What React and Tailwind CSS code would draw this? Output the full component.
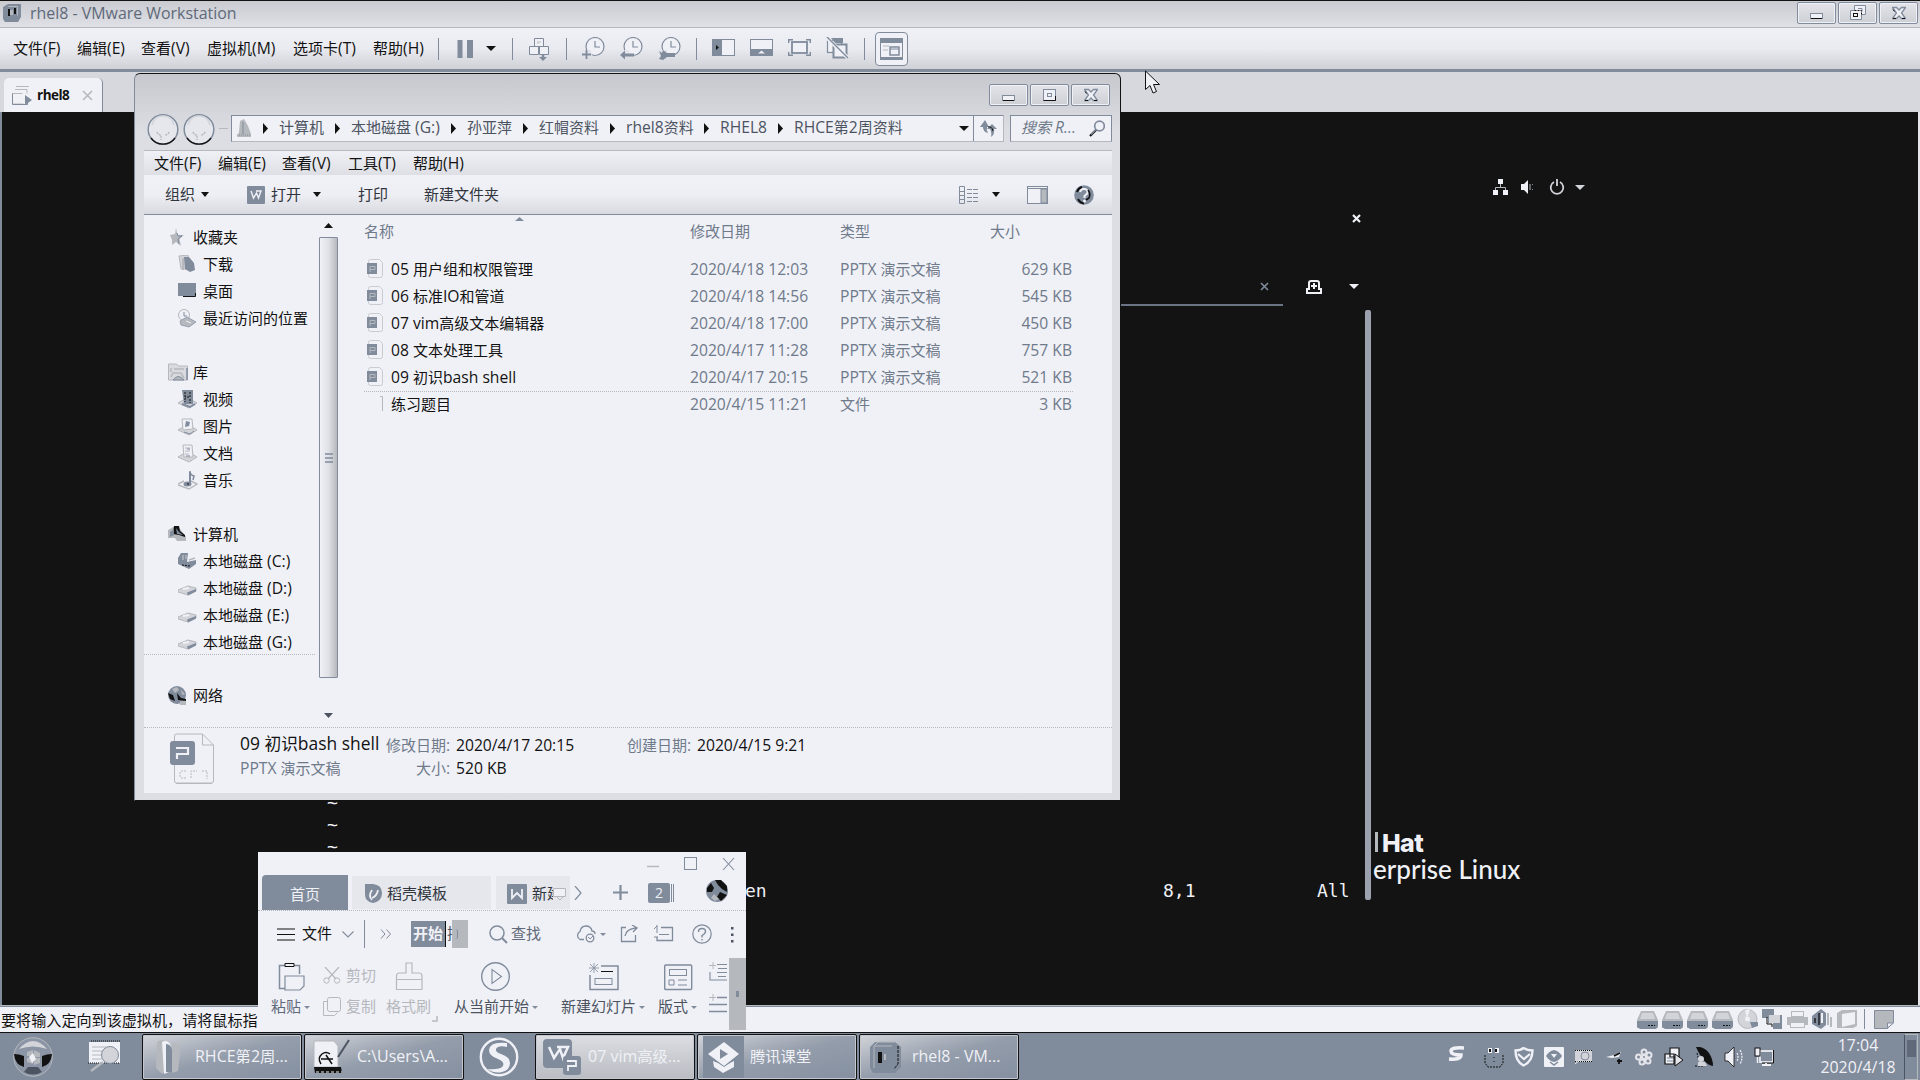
import React from "react";

/* Splits a label so that Latin runs are set slightly larger than the CJK glyphs. */
function T({ children, className = "" }) {
  const parts = String(children).split(/([\u2E80-\u9FFF\uFF00-\uFFEF]+)/).filter(Boolean);
  return (
    <span className={"block shrink-0 whitespace-pre pb-[2px] " + className}>
      {parts.map((p, i) =>
        /[\u2E80-\u9FFF\uFF00-\uFFEF]/.test(p) ? (
          <span key={i}>{p}</span>
        ) : (
          <span key={i} className="text-[1.045em]">{p}</span>
        )
      )}
    </span>
  );
}

const G = "#808b9c";
const L = "#b5b8bd";
const W = "#f0f1f6";
const K = "#121212";

function Svg({ w, h, children, className = "" }) {
  return (
    <svg width={w} height={h} viewBox={`0 0 ${w} ${h}`} fill="none" className={"block shrink-0 " + className}>
      {children}
    </svg>
  );
}

function Sep({ className = "" }) {
  return <div className={"w-px h-[22px] shrink-0 bg-[#808b9c] " + className} />;
}

function Caret({ className = "", color = K, w = 9, h = 5 }) {
  return (
    <Svg w={w} h={h} className={className}>
      <path d={`M0 0H${w}L${w / 2} ${h}Z`} fill={color} />
    </Svg>
  );
}

function WinButton({ kind }) {
  return (
    <div className="w-[39px] h-[22px] shrink-0 flex items-center justify-center rounded-[2px] border border-[#808b9c] bg-gradient-to-b from-[#e4e5ea] to-[#cccfd4] shadow-[inset_0_0_0_1px_#f0f1f6]">
      {kind === "min" && (
        <Svg w={14} h={14}><rect x="0.5" y="7.5" width="12" height="5" fill={W} stroke={G} /><path d="M1 12.5H12" stroke={K} /></Svg>
      )}
      {kind === "max" && (
        <Svg w={14} h={14}><rect x="0.5" y="1.5" width="12" height="11" fill={W} stroke={G} /><path d="M0.5 12.5h12V8" stroke={K} /><rect x="4.5" y="5.5" width="4" height="3" stroke={G} /></Svg>
      )}
      {kind === "restore" && (
        <Svg w={16} h={16}><path d="M4.5 0.5h11v9h-4v5h-11v-9h4z" fill={W} stroke={G} /><rect x="3.5" y="8.5" width="4" height="3" stroke={K} /><path d="M8 3.5h4v3" stroke={G} /><path d="M4.5 5.5h7v4" stroke={K} strokeDasharray="2 1" /></Svg>
      )}
      {kind === "close" && (
        <Svg w={14} h={14}><path d="M0.5 1.5h4L7 4l2.500-2.500h4L9.500 7l4 5.500h-4L7 10l-2.500 2.500h-4L4.500 7z" fill={W} stroke={G} strokeWidth="1.300" /><path d="M1 12.500h3M10 12.500h3M1 3.500l1.500 2" stroke={K} /></Svg>
      )}
    </div>
  );
}

function Clock({ badge }) {
  return (
    <Svg w={23} h={24}>
      <circle cx="13" cy="9.500" r="9" stroke={G} strokeWidth="1.200" fill={W} />
      <path d="M13 4v6h5" stroke={G} strokeWidth="1.200" />
      <path d="M0 13h9l1 6H0z" fill="#e4e5ea" />
      {badge === "plus" && <path d="M4.500 13v9M0 17.500h9" stroke={G} strokeWidth="1.800" />}
      {badge === "back" && <path d="M0 18l5-4.500V16.500h9v3H5V22.500z" fill={G} />}
      {badge === "wrench" && <path d="M1 14l3 2 1-3 4 3h8v4H9l-4 3-4-1 2-3z" fill={G} />}
    </Svg>
  );
}

function VmTitle() {
  return (
    <div className="h-[28px] flex border-t border-t-[#121212] border-b border-b-[#b5b8bd] bg-gradient-to-b from-[#c9cbd0] to-[#dfe1e6] pl-[3px]">
      <Svg w={20} h={20} className="mt-[2px]">
        <path d="M5 1h13v13l-3 5H2L0 16V4z" fill={G} />
        <path d="M5.500 3.500h9v9" stroke={L} />
        <path d="M6 6v7M12 5v6" stroke={K} strokeWidth="2" />
        <path d="M7 7h3v5h-3z" fill={L} />
      </Svg>
      <T className="ml-[7px] mt-px text-[15.250px] leading-[22px] text-[#5f697a]">rhel8 - VMware Workstation</T>
      <div className="flex-1" />
      <div className="flex gap-[2px] mt-px pr-[2px]"><WinButton kind="min" /><WinButton kind="restore" /><WinButton kind="close" /></div>
    </div>
  );
}

function VmMenu() {
  return (
    <div className="h-[41px] flex items-center bg-gradient-to-b from-[#f0f1f6] via-[#eaebf0] to-[#cfd1d6] pl-[13px] text-[15px] leading-[20px]">
      <T className="w-[64px]">文件(F)</T>
      <T className="w-[64px]">编辑(E)</T>
      <T className="w-[66px]">查看(V)</T>
      <T className="w-[86px]">虚拟机(M)</T>
      <T className="w-[80px]">选项卡(T)</T>
      <T className="w-[65px]">帮助(H)</T>
      <Sep />
      <Svg w={16} h={18} className="ml-[18px]"><path d="M0.500 0h5v18h-5zM10 0h6v18h-6z" fill={G} /></Svg>
      <Caret className="ml-[13px]" w={10} />
      <Sep className="ml-[16px]" />
      <Svg w={22} h={24} className="ml-[15px]">
        <path d="M6.500 1.500h9v8h-9zM1.500 9.500h9v8h-9zM11.500 9.500h9v8h-9z" stroke={G} fill={W} />
        <path d="M10 4v3M12 4v2" stroke={L} />
        <path d="M15 17v4" stroke={G} strokeWidth="2.500" /><path d="M11 20h8l-4 4z" fill={G} />
      </Svg>
      <Sep className="ml-[16px]" />
      <div className="ml-[15px] flex gap-[15px]"><Clock badge="plus" /><Clock badge="back" /><Clock badge="wrench" /></div>
      <Sep className="ml-[15px]" />
      <div className="flex ml-[15px] gap-[15px]">
        <Svg w={23} h={17}><rect x="0.500" y="0.500" width="22" height="16" stroke={G} fill={W} /><path d="M0 0h10v17H0z" fill={G} /><path d="M4 6l3 2.500L4 11z" fill={K} /></Svg>
        <Svg w={23} h={17}><rect x="0.500" y="0.500" width="22" height="16" stroke={G} fill={W} /><path d="M0 10h23v7H0z" fill={G} /><path d="M8 14.500h7l-3.500-3z" fill={W} /></Svg>
        <Svg w={23} h={17}><rect x="4" y="3" width="15" height="11" stroke={G} strokeWidth="1.800" fill={W} /><path d="M0.700 4V0.700H5M18 0.700h4.300V4M0.700 13v3.300H5M18 16.300h4.300V13" stroke={G} strokeWidth="1.400" /></Svg>
        <Svg w={23} h={22} className="-mt-[2px]"><rect x="1.500" y="3.500" width="14" height="12" fill={W} stroke={G} strokeWidth="1.200" /><rect x="7.500" y="7.500" width="13" height="13" fill={W} stroke={G} strokeWidth="2" /><path d="M5 1h12v5H9z" fill={G} /><path d="M1 1L22 21" stroke={W} strokeWidth="3.500" /><path d="M1 0L22 21" stroke={G} strokeWidth="1.400" /></Svg>
      </div>
      <Sep className="ml-[15px]" />
      <div className="ml-[10px] w-[33px] h-[34px] shrink-0 rounded-[4px] border border-[#808b9c] bg-[#f0f1f6] flex items-center justify-center">
        <Svg w={23} h={22}><rect x="0.500" y="0.500" width="22" height="21" stroke={G} fill={W} /><path d="M0 0h23v5H0zM0 19h23v3H0z" fill={G} /><path d="M3 8h6M3 12h5" stroke={L} /><rect x="10" y="9" width="9" height="8" fill={W} stroke={G} strokeWidth="1.500" /><path d="M10 11h9" stroke={G} /></Svg>
      </div>
    </div>
  );
}

function VmTabs() {
  return (
    <div className="h-[40px] flex items-end bg-[#d6d8dd] pl-[4px]">
      <div className="w-[99px] h-[34px] shrink-0 rounded-t-[5px] border-r border-[#808b9c] bg-[#f0f1f6] flex items-center pl-[8px]">
        <Svg w={20} h={21}>
          <path d="M4 1.500h13M3 4.500h12v4M1 8.500h9.500M0.500 8v11h11" stroke={L} />
          <path d="M0.500 8.500v11h15v-3" stroke={G} />
          <path d="M13 10l7 5-7 5z" fill={G} />
        </Svg>
        <span className="ml-[5px] text-[13.500px] leading-[20px] font-bold tracking-[-0.500px]">rhel8</span>
        <Svg w={11} h={11} className="ml-[13px]"><path d="M1 1l9 9M10 1l-9 9" stroke={L} strokeWidth="1.600" /></Svg>
      </div>
    </div>
  );
}

/* ---------- guest desktop ---------- */

function Guest() {
  return (
    <div className="relative h-[893px] bg-[#131313] border-l-2 border-l-[#808b9c] border-r-2 border-r-[#e4e5ea] overflow-hidden">
      <div className="absolute left-[1491px] top-[67px] flex items-center">
        <Svg w={16} h={16}><path d="M5 0h5v5H5zM0 11h5v5H0zM10 11h5v5h-5z" fill={W} /><path d="M7.500 5v3.500M2.500 11V8.500h10V11" stroke={L} /></Svg>
        <Svg w={13} h={14} className="ml-[12px]"><path d="M0 4h3l4-4v14l-4-4H0z" fill={W} /><path d="M9 4v6" stroke={L} /><path d="M11.500 4v1M11.500 9v1" stroke={G} /></Svg>
        <Svg w={16} h={16} className="ml-[15px]"><path d="M5 3a6.300 6.300 0 1 0 6 0M8 0v7" stroke="#d2d4d9" strokeWidth="1.800" /></Svg>
        <Caret className="ml-[10px]" w={10} color="#d2d4d9" />
      </div>
      <Svg w={9} h={9} className="absolute left-[1350px] top-[102px]"><path d="M1 1l7 7M8 1l-7 7" stroke={W} strokeWidth="2.200" /></Svg>
      <Svg w={9} h={9} className="absolute left-[1258px] top-[170px]"><path d="M1 1l7 7M8 1l-7 7" stroke={G} strokeWidth="1.600" /></Svg>
      <Svg w={16} h={14} className="absolute left-[1304px] top-[168px]"><path d="M3 9V3q0-2 2-2h6q2 0 2 2v6h2v4H1V9z" stroke={W} strokeWidth="2" /><path d="M8 3v6M5 6h6" stroke={W} strokeWidth="2" /></Svg>
      <Caret className="absolute left-[1347px] top-[172px]" w={10} color={W} />
      <div className="absolute left-[1110px] top-[192px] w-[171px] h-[2px] bg-[#6a7484]" />
      <div className="absolute left-[1363px] top-[198px] w-[6px] h-[590px] rounded-[2px] bg-[#9ba1ad]" />
      <div className="absolute left-[1373px] top-[720px] w-[3px] h-[20px] bg-[#b5b8bd]" />
      <div className="absolute left-[1380px] top-[716px] text-[25px] leading-[30px] font-extrabold tracking-[-0.600px] text-[#f0f1f6] [font-family:Inter]">Hat</div>
      <div className="absolute left-[1371px] top-[742px] text-[26px] leading-[30px] text-[#f0f1f6] [font-family:Lato] font-medium">erprise Linux</div>
      <div className="absolute left-[325px] top-[680px] text-[18px] leading-[22px] text-[#f0f1f6] [font-family:'DejaVu_Sans_Mono']">
        <div className="flex flex-col"><span>~</span><span>~</span><span>~</span></div>
      </div>
      <div className="absolute left-[743px] top-[768px] flex text-[18px] leading-[22px] text-[#f0f1f6] [font-family:'DejaVu_Sans_Mono']">
        <span className="w-[418px]">en</span><span className="w-[154px]">8,1</span><span>All</span>
      </div>
    </div>
  );
}

/* ---------- status bar ---------- */

function Disk() {
  return (
    <Svg w={21} h={19}><path d="M4 1h13l4 9v8H0v-8z" fill={L} /><path d="M5 3h11l2 6H3z" fill="#d2d4d9" /><path d="M0 11h21v5l-2 3H3l-3-2z" fill={G} /><path d="M11 15.500h7" stroke={K} strokeDasharray="2 1" /></Svg>
  );
}

function StatusBar() {
  return (
    <div className="h-[27px] flex items-center bg-[#f0f1f6] border-t border-t-[#b5b8bd] shadow-[inset_0_1px_0_#808b9c]">
      <T className="w-[1637px] pl-px !pb-0 pt-[2px] text-[15.100px] leading-[20px]">要将输入定向到该虚拟机，请将鼠标指</T>
      <div className="flex items-center gap-[4px]">
        <Disk /><Disk /><Disk /><Disk />
        <Svg w={21} h={20}><circle cx="10.500" cy="10" r="9.500" fill="#d2d4d9" stroke={L} /><circle cx="10.500" cy="10" r="2.500" fill={W} /><path d="M13 13h8v4l-6 2z" fill={G} /><path d="M10 9L8 1l5-1z" fill={W} /></Svg>
        <Svg w={21} h={20}><path d="M0 0h12v6h8v14h-9v-6H6V9H0z" fill={G} /><rect x="7" y="6" width="11" height="8" fill="#d2d4d9" /><path d="M5 8v7h5v3" stroke={K} /></Svg>
        <Svg w={21} h={20}><path d="M4 2h13v6h4v8h-3v3H3v-3H0V8h4z" fill={L} /><path d="M5 3h11v4H5zM4 14h13v4H4z" fill={W} /><path d="M3 11h15" stroke={L} /></Svg>
        <Svg w={21} h={20}><path d="M9 0l5 4v12l-5 4-9-5V7z" fill={G} /><path d="M7 4v12M3 9v5" stroke={K} strokeWidth="1.300" /><path d="M10 4v10" stroke={W} strokeWidth="2" /><path d="M16 4v12M19 8v10" stroke={L} strokeWidth="2" /></Svg>
        <Svg w={21} h={20}><path d="M0 4l5-3h15v16l-4 2H0z" fill={L} /><path d="M5 5l13-2v12l-13 3z" fill={W} /></Svg>
      </div>
      <Sep className="ml-[6px] !h-[20px]" />
      <Svg w={20} h={19} className="ml-[9px]"><path d="M0.500 0.500h19v12l-6 6h-13z" fill={L} stroke={G} /><path d="M13.500 18v-5h6z" fill={W} stroke={G} /></Svg>
    </div>
  );
}

/* ---------- explorer ---------- */

function Arrow() {
  return <div className="w-[5px] shrink-0"><Svg w={5} h={11}><path d="M0 0l5 5.500L0 11z" fill={K} /></Svg></div>;
}

function Glass() {
  return (
    <Svg w={16} h={17}><circle cx="10.500" cy="6" r="4.800" stroke={G} strokeWidth="1.700" /><path d="M7 10l-6 6" stroke={K} strokeWidth="2.200" /><path d="M7 9.500l-5 5" stroke={G} strokeWidth="1.500" /></Svg>
  );
}

function NavButtons() {
  const c = (
    <Svg w={32} h={33}>
      <circle cx="16" cy="16.500" r="14.800" fill="#e6e7ec" stroke={G} strokeWidth="1.500" />
      <path d="M4 25a14.800 14.800 0 0 0 24 0" stroke={K} strokeWidth="1.300" />
      <path d="M10 19q1 3 4 3v5M22 19q-1 3-4 3" stroke={L} strokeWidth="1.400" strokeDasharray="2 1" />
      <path d="M5 12q2-9 11-9t11 9" stroke="#d2d4d9" strokeWidth="1.500" />
    </Svg>
  );
  return <div className="flex gap-[4px] w-[84px] shrink-0 ml-[3px] pt-[2px]">{c}{c}<div className="w-[9px] h-px mt-[15px] bg-[#b5b8bd] shrink-0" /></div>;
}

function AddressRow() {
  return (
    <div className="h-[42px] flex items-center pb-[4px] text-[15px] leading-[20px] text-[#4c5462]">
      <NavButtons />
      <div className="w-[773px] h-[27px] shrink-0 border border-[#b5b8bd] border-t-[#808b9c] border-l-[#808b9c] bg-[#f0f1f6] flex items-center pl-[5px]">
        <Svg w={14} h={18}><path d="M3 2l4-2 4 7 3 8v3H0l2-5z" fill={L} /><path d="M6 3v12" stroke={G} /><path d="M0 16h13" stroke={G} strokeDasharray="1 1" /></Svg>
        <div className="w-[12px] shrink-0" />
        <Arrow /><T className="w-[67px] pl-[11px]">计算机</T>
        <Arrow /><T className="w-[111px] pl-[11px]">本地磁盘 (G:)</T>
        <Arrow /><T className="w-[67px] pl-[11px]">孙亚萍</T>
        <Arrow /><T className="w-[82px] pl-[11px]">红帽资料</T>
        <Arrow /><T className="w-[89px] pl-[11px]">rhel8资料</T>
        <Arrow /><T className="w-[69px] pl-[11px]">RHEL8</T>
        <Arrow /><T className="w-[176px] pl-[11px]">RHCE第2周资料</T>
        <Caret w={10} />
        <div className="ml-[4px] w-px h-[25px] bg-[#808b9c] shrink-0" />
        <Svg w={17} h={17} className="ml-[6px]"><path d="M5 0L0 7h3q0 5 5 6-2-3-1-6h2z" fill={G} /><path d="M12 4L7 9h3q2 3 1 8 4-3 3-8h3z" fill={G} /><path d="M8 7q4-1 5 4" stroke={K} /></Svg>
      </div>
      <div className="ml-[6px] w-[102px] h-[27px] shrink-0 border border-[#808b9c] border-b-[#b5b8bd] bg-[#f0f1f6] flex items-center pl-[10px] text-[#6f7a8b]">
        <T className="w-[68px] italic">搜索 R...</T>
        <Glass />
      </div>
    </div>
  );
}

function ExplorerMenu() {
  return (
    <div className="h-[26px] flex items-center border-t border-t-[#b5b8bd] border-b border-b-[#b5b8bd] bg-gradient-to-b from-[#f0f1f6] to-[#dddfe4] pl-[10px] pt-[2px] text-[15px] leading-[20px]">
      <T className="w-[64px]">文件(F)</T><T className="w-[64px]">编辑(E)</T><T className="w-[66px]">查看(V)</T><T className="w-[65px]">工具(T)</T><T>帮助(H)</T>
    </div>
  );
}

function ExplorerTools() {
  return (
    <div className="h-[40px] flex items-center border-b border-b-[#808b9c] bg-gradient-to-b from-[#f0f1f6] via-[#eeeff4] to-[#d8dadf] pl-[21px] text-[15px] leading-[20px] text-[#30353e]">
      <T>组织</T><Caret className="ml-[6px]" w={8} />
      <div className="ml-[38px] w-[18px] h-[18px] shrink-0 bg-[#808b9c] rounded-[1px] flex items-center justify-center">
        <Svg w={12} h={10}><path d="M1 1l2.500 7 3-5 2 5 2.500-7H6" stroke={W} strokeWidth="1.400" /></Svg>
      </div>
      <T className="ml-[6px]">打开</T><Caret className="ml-[12px]" w={8} />
      <T className="ml-[37px] w-[66px]">打印</T><T className="w-[535px]">新建文件夹</T>
      <Svg w={19} h={18}><path d="M0.500 0.500h5v17h-5zM0 5.500h6M0 9.500h6M0 13.500h6" stroke={G} /><path d="M8 3.500h11M8 7.500h11M8 11.500h11M8 15.500h11" stroke={G} strokeDasharray="5 1" /></Svg>
      <Caret className="ml-[14px]" w={8} />
      <Svg w={21} h={18} className="ml-[27px]"><rect x="0.500" y="0.500" width="20" height="17" fill={W} stroke={G} /><path d="M0 2.500h21" stroke={G} /><path d="M14 3h6v14h-6z" fill={L} stroke={G} /></Svg>
      <Svg w={20} h={20} className="ml-[26px]"><circle cx="10" cy="10" r="9.800" fill={G} /><path d="M3 7a7.500 7.500 0 0 1 5-5M4 14q2 4 6 4.500" stroke={K} strokeWidth="2" /><path d="M6 7q1-3.500 4.500-3t3 3.500q-.3 1.500-3 3.500v2" stroke={W} strokeWidth="2" /><circle cx="10.500" cy="16" r="1.500" fill={W} /><path d="M14 5q3 4 1 8l-3 2" stroke={K} strokeWidth="1.600" /></Svg>
    </div>
  );
}

function SideIcon({ kind }) {
  const base = <path d="M0 13l5-3h9l5 3-8 5z" fill="#d2d4d9" stroke={L} />;
  const d = {
    star: <><path d="M8 0l1.500 7H16l-4.500 4 1.500 7-5-4-4 3V12L2 7l5-1z" fill={L} /><path d="M9 5l1 3h4l-4 3 1 5" stroke={G} /></>,
    down: <><path d="M1 1l9-1 1 14H3z" fill="#d2d4d9" stroke={L} /><path d="M6 2l5 0 5 6 1 7-5 2-5-3z" fill={G} /><path d="M5 3v12" stroke={L} strokeWidth="2" /></>,
    desk: <><path d="M0 1h18v13H0z" fill={G} /><path d="M5 14.500h12.500V11" stroke={K} /></>,
    recent: <><circle cx="6" cy="6" r="5.500" fill={W} stroke={L} /><path d="M6 3v4h3" stroke={G} /><path d="M2 12l7-4 9 5-7 5-8-2z" fill={L} stroke={G} strokeWidth=".7" /><path d="M8 12l5 2" stroke={W} /></>,
    lib: <><path d="M0.500 1h8l2 2h9v14h-19z" fill="#d8dadf" stroke={L} /><path d="M3 5v4M6 6h10M3 14l2-4 8 0 3 5" stroke={L} strokeWidth="1.500" /><path d="M5 17q5-7 11 0z" fill={L} stroke={G} /><path d="M19 5v12" stroke={G} strokeWidth="1.500" /></>,
    video: <>{base}<path d="M4 0h11v14H6z" fill={G} /><path d="M7 2v10M12 2v5h-5M12 9v4" stroke={K} strokeDasharray="2 1" /><path d="M4 14l8 3 5-3" stroke={G} strokeWidth="2" /></>,
    pic: <>{base}<path d="M4 2h10l1 10-10 1z" fill={W} stroke={L} /><path d="M8 4l4 1-1 4-4 1z" fill={G} /><path d="M6 15l6 2 4-3" stroke={G} /></>,
    doc: <>{base}<path d="M5 1h9l1 12H6z" fill={W} stroke={L} /><path d="M7 4h5M7 7h5M7 10h4" stroke={L} /><path d="M9 5h3M8 12h4" stroke={G} /></>,
    music: <><path d="M0 13l6-3M13 10l6 3-8 5-11-4" stroke={L} strokeWidth="1.400" /><path d="M12 1v12" stroke={G} strokeWidth="2" /><path d="M12 0q0 4 4 5l-1 4" stroke={G} strokeWidth="1.500" /><ellipse cx="9.500" cy="13" rx="4" ry="2.500" fill={G} /><path d="M9 13h2" stroke={K} /></>,
    pc: <><path d="M0 5l7-4 5 3 6 8v4H9l-2-3H0z" fill={L} /><path d="M6 1h5l1 5 5 4v2l-6-2-6-1z" fill={K} /><path d="M8 3l3 4 4 3-6-1z" fill={G} /><path d="M2 7l4-3v6l-4 2z" fill={G} /></>,
    diskc: <><path d="M0 12V6l3-5h7l-1 9 9-2v4l-7 5z" fill={G} /><path d="M11 8l6-2M5 3v5M8 3v4" stroke={L} strokeWidth="1.500" /><path d="M4 13l8 1" stroke={K} strokeDasharray="2 1" /></>,
    disk: <><path d="M0 11l10-4 8 2v3l-8 4-10-3z" fill="#d2d4d9" stroke={L} /><path d="M9 13.500l9-3.500v2.500l-8 4z" fill={G} /><path d="M5 10l6-1" stroke={W} strokeWidth="2" /></>,
    net: <><circle cx="9" cy="9" r="9" fill={G} /><path d="M4 3l3 4 4-3-2-3zM13 4l4 4-3 1z" fill={L} /><path d="M0 7l5 2 2 6-5-2zM9 7l4 5 5 1v2l-8-1z" fill={K} /><path d="M12 15h6v4h-6z" fill={L} /></>,
  }[kind];
  return <Svg w={20} h={19}>{d}</Svg>;
}

function Side({ icon, children, root }) {
  return (
    <div className={"h-[27px] flex items-center gap-[5px] text-[15px] leading-[20px] " + (root ? "pl-[24px]" : "pl-[34px]")}>
      <SideIcon kind={icon} />
      <T>{children}</T>
    </div>
  );
}

function Sidebar() {
  return (
    <div className="w-[175px] shrink-0 pt-[9px] overflow-hidden">
      <Side icon="star" root>收藏夹</Side>
      <Side icon="down">下载</Side>
      <Side icon="desk">桌面</Side>
      <Side icon="recent">最近访问的位置</Side>
      <div className="h-[27px]" />
      <Side icon="lib" root>库</Side>
      <Side icon="video">视频</Side>
      <Side icon="pic">图片</Side>
      <Side icon="doc">文档</Side>
      <Side icon="music">音乐</Side>
      <div className="h-[27px]" />
      <Side icon="pc" root>计算机</Side>
      <Side icon="diskc">本地磁盘 (C:)</Side>
      <Side icon="disk">本地磁盘 (D:)</Side>
      <Side icon="disk">本地磁盘 (E:)</Side>
      <Side icon="disk">本地磁盘 (G:)</Side>
      <div className="h-[27px] mr-[4px] -mt-[2px] border-t border-dotted border-[#b5b8bd]" />
      <div className="h-px" />
      <Side icon="net" root>网络</Side>
    </div>
  );
}

function ScrollBar() {
  return (
    <div className="w-[19px] shrink-0 flex flex-col items-center">
      <Svg w={9} h={5} className="mt-[8px]"><path d="M0 5h9L4.500 0z" fill={K} /></Svg>
      <div className="mt-[9px] w-[19px] h-[441px] shrink-0 border border-[#808b9c] rounded-[1px] bg-gradient-to-r from-[#f0f1f6] via-[#dfe1e6] to-[#b5b8bd] flex items-center justify-center">
        <Svg w={8} h={10}><path d="M0 1h8M0 5h8M0 9h8" stroke={G} strokeWidth="1.500" /></Svg>
      </div>
      <Caret className="mt-[35px]" color="#4c5462" />
    </div>
  );
}

const FILES = [
  ["05 用户组和权限管理", "2020/4/18 12:03", "PPTX 演示文稿", "629 KB"],
  ["06 标准IO和管道", "2020/4/18 14:56", "PPTX 演示文稿", "545 KB"],
  ["07 vim高级文本编辑器", "2020/4/18 17:00", "PPTX 演示文稿", "450 KB"],
  ["08 文本处理工具", "2020/4/17 11:28", "PPTX 演示文稿", "757 KB"],
  ["09 初识bash shell", "2020/4/17 20:15", "PPTX 演示文稿", "521 KB"],
  ["练习题目", "2020/4/15 11:21", "文件", "3 KB"],
];

function FileIcon({ plain }) {
  return (
    <Svg w={17} h={20}>
      {plain ? (
        <path d="M13 2.500h2.500V17" stroke={L} />
      ) : (
        <><path d="M1.500 4V2.500q0-2 2-2h9l3 3v13q0 2-2 2h-10q-2 0-2-2V15" stroke="#c9cbd0" /><path d="M0 4h10v11H0z" fill={G} /><path d="M3 13V7.500h5v3H3" stroke={L} strokeWidth="1" /></>
      )}
    </Svg>
  );
}

function FileList() {
  return (
    <div className="flex-1 pl-[26px] text-[15px] leading-[20px]">
      <div className="h-[42px] relative flex items-center pb-[9px] text-[#6f7a8b]">
        <Svg w={9} h={4} className="absolute left-[151px] top-[2px]"><path d="M0 4h9L4.500 0z" fill={G} /></Svg>
        <T className="w-[326px]">名称</T><T className="w-[150px]">修改日期</T><T className="w-[150px]">类型</T><T>大小</T>
      </div>
      {FILES.map((f, i) => (
        <div key={i} className={"h-[27px] w-[709px] flex items-center pl-[3px] border-b " + (i === 4 ? "border-dotted border-[#b5b8bd]" : "border-transparent")}>
          <div className="w-[24px] shrink-0 pb-[2px]"><FileIcon plain={i === 5} /></div>
          <T className="w-[299px]">{f[0]}</T>
          <T className="w-[150px] text-[#6f7a8b]">{f[1]}</T>
          <T className="w-[133px] text-[#6f7a8b]">{f[2]}</T>
          <T className="w-[99px] text-right text-[#6f7a8b]">{f[3]}</T>
        </div>
      ))}
    </div>
  );
}

function Details() {
  return (
    <div className="h-[66px] flex border-t border-dotted border-t-[#b5b8bd] bg-[#f0f1f6] text-[15px] leading-[20px] text-[#6f7a8b]">
      <Svg w={44} h={52} className="ml-[26px] mt-[5px]">
        <path d="M4.500 8V3q0-2 2-2h26l11 11v36q0 2-2 2h-35q-2 0-2-2V30" stroke={L} />
        <path d="M32.500 1v11h11" stroke={L} /><path d="M6 50.500h36" stroke={L} />
        <rect y="8" width="25" height="24" rx="3" fill={G} />
        <path d="M7 26v-5h11v-6H6" stroke={W} strokeWidth="2.200" />
        <path d="M16 38h-4q-2 0-2 3v1q0 3 2 3h4M21 45v-7h6M32 38h5v8" stroke={L} strokeDasharray="2 1" />
      </Svg>
      <div className="ml-[26px] flex flex-col">
        <div className="flex items-center h-[29px] mt-[2px]">
          <T className="w-[146px] text-[16.700px] text-[#121212]">09 初识bash shell</T>
          <T className="w-[70px] mt-[3px]">修改日期:</T>
          <T className="w-[171px] mt-[3px] text-[#121212]">2020/4/17 20:15</T>
          <T className="w-[70px] mt-[3px]">创建日期:</T>
          <T className="mt-[3px] text-[#121212]">2020/4/15 9:21</T>
        </div>
        <div className="flex items-center h-[20px]">
          <T className="w-[176px]">PPTX 演示文稿</T>
          <T className="w-[40px]">大小:</T>
          <T className="text-[#121212]">520 KB</T>
        </div>
      </div>
    </div>
  );
}

function Explorer() {
  return (
    <div className="absolute left-[134px] top-[73px] w-[987px] h-[728px] rounded-t-[6px] border border-[#121212] border-l-[#808b9c] bg-gradient-to-b from-[#c6c8cd] via-[#dcdee3] via-[8%] to-[#dcdee3] pl-[9px] pr-[8px] flex flex-col overflow-hidden">
      <div className="h-[36px] flex shrink-0 justify-end gap-[2px] pt-[10px] pr-[2px]">
        <WinButton kind="min" /><WinButton kind="max" /><WinButton kind="close" />
      </div>
      <div className="-mt-px"><AddressRow /></div>
      <div className="-mt-[1px]"><ExplorerMenu /></div>
      <div className="-mt-px"><ExplorerTools /></div>
      <div className="h-[512px] shrink-0 flex bg-[#f0f1f6]">
        <Sidebar /><ScrollBar /><FileList />
      </div>
      <Details />
    </div>
  );
}

/* ---------- presentation editor ---------- */

function Wps() {
  return (
    <div className="absolute left-[258px] top-[852px] w-[488px] h-[179px] bg-[#f0f1f6] overflow-hidden text-[15px] leading-[20px] text-[#4c5462]">
      <div className="h-[23px] flex pl-[389px] pt-[5px]">
        <Svg w={12} h={14}><path d="M0 9.500h12" stroke={L} strokeWidth="1.500" /></Svg>
        <Svg w={13} h={14} className="ml-[25px]"><rect x="0.500" y="0.500" width="12" height="12" stroke={G} /></Svg>
        <Svg w={13} h={14} className="ml-[25px]"><path d="M1 1l11 12M12 1L1 13" stroke={G} strokeWidth="1.100" /></Svg>
      </div>
      <div className="h-[36px] flex items-center border-b border-dotted border-b-[#b5b8bd] pl-[4px]">
        <div className="w-[86px] h-[35px] shrink-0 rounded-tl-[4px] bg-[#808b9c] text-[#f0f1f6] flex items-center justify-center pt-[4px]"><T>首页</T></div>
        <div className="ml-[4px] w-[139px] h-[33px] shrink-0 bg-[#e6e7ec] flex items-center pl-[13px] pt-[2px] text-[#30353e]">
          <Svg w={17} h={19}><path d="M0 0h8q9 1 9 9t-9 10q-8-1-8-9z" fill={G} /><path d="M7 16q-4-4 0-10M7 14q5-2 6-8" stroke={W} strokeWidth="1.700" /></Svg>
          <T className="ml-[5px]">稻壳模板</T>
        </div>
        <div className="ml-[5px] w-[74px] h-[33px] shrink-0 bg-[#e6e7ec] flex items-center pl-[11px] pt-[2px] text-[#30353e]">
          <Svg w={20} h={20}><rect width="20" height="20" rx="1" fill={G} /><path d="M5 5v9l5-5 5 5V5" stroke={W} strokeWidth="1.800" /></Svg>
          <T className="ml-[5px] w-[21px] overflow-hidden">新建</T>
          <Svg w={13} h={14}><path d="M0.500 1.500h12v8h-12z" fill={W} stroke={L} /><path d="M4 10l3 3 3-3" stroke={L} /></Svg>
        </div>
        <Svg w={8} h={14} className="ml-[4px]"><path d="M1 0l6 7-6 7" stroke={G} strokeWidth="1.200" /></Svg>
        <Svg w={15} h={15} className="ml-[31px]"><path d="M7.500 0v15M0 7.500h15" stroke={G} strokeWidth="2.200" /></Svg>
        <div className="ml-[20px] w-[22px] h-[20px] bg-[#808b9c] rounded-[2px] text-[#f0f1f6] text-center text-[14px] leading-[20px] shrink-0">2</div>
        <div className="ml-[1px] w-[3px] h-[18px] border-x border-[#808b9c] shrink-0" />
        <Svg w={22} h={22} className="ml-[32px] -mt-[3px]"><circle cx="11" cy="11" r="11" fill={G} /><path d="M1 8l4-5 3 5-2 4H1zM9 0h6l6 6v6l-5-3-4-4zM14 12l7 3-6 6-4-4z" fill={K} /><path d="M8 14l5 5-4 2-4-3z" fill={L} /></Svg>
      </div>
      <div className="h-[46px] flex items-center pl-[19px]">
        <Svg w={18} h={13}><path d="M0 1h18M0 6.500h18M0 12h18" stroke={K} strokeWidth="1.100" /></Svg>
        <T className="ml-[7px] w-[40px] text-[#121212]">文件</T>
        <Svg w={12} h={7}><path d="M0.500 0.500L6 6l5.500-5.500" stroke={G} strokeWidth="1.100" /></Svg>
        <Sep className="ml-[10px] !h-[28px]" />
        <Svg w={12} h={10} className="ml-[15px]"><path d="M1 0.500L5 5l-4 4.500M6.500 0.500L10.500 5l-4 4.500" stroke={G} /></Svg>
        <div className="ml-[19px] w-[35px] h-[26px] shrink-0 bg-[#808b9c] border-r border-[#121212] text-[#f0f1f6] font-bold flex items-center pl-[2px]"><T>开始</T></div>
        <T className="w-[5px] ml-[1px] overflow-hidden">插</T>
        <div className="w-[16px] h-[28px] shrink-0 bg-[#b5b8bd] overflow-hidden"><div className="w-[6px] h-[10px] mt-[9px] border-r border-[#808b9c] rounded-full" /></div>
        <Svg w={19} h={19} className="ml-[21px]"><circle cx="8" cy="8" r="7" stroke={G} strokeWidth="1.500" /><path d="M13 13l5 5" stroke={G} strokeWidth="2" /></Svg>
        <T className="ml-[3px] text-[#5f697a]">查找</T>
        <Svg w={31} h={18} className="ml-[34px]"><path d="M9 14.500H5a4.500 4.500 0 0 1 0-8Q6 1 11 1t6 5q3 0 3 3" stroke={G} strokeWidth="1.300" /><circle cx="15" cy="13" r="3.800" stroke={G} strokeWidth="1.300" /><path d="M13 12l2 2 3-3" stroke={G} /><path d="M25 8h6l-3 3z" fill={G} /></Svg>
        <Svg w={18} h={18} className="ml-[14px]"><path d="M6 2.500H1.500v14h14V10M5 11q1-7 11-8M12 0l5 3-4 4" stroke={G} strokeWidth="1.300" /></Svg>
        <Svg w={20} h={18} className="ml-[16px]"><path d="M7 2.500h11.500v13H3V12" stroke={G} strokeWidth="1.300" /><path d="M3 0v8M0 4l3-3M5 9.500h10M0 12h4" stroke={G} /></Svg>
        <Svg w={20} h={20} className="ml-[18px]"><circle cx="10" cy="10" r="9.200" stroke={G} strokeWidth="1.200" /><path d="M6.500 8q0-3.500 3.500-3.500t3.500 3q0 2-3.500 4v2M10 15v1.500" stroke={G} strokeWidth="1.400" /></Svg>
        <Svg w={3} h={17} className="ml-[19px]"><path d="M0 1h2.500v2.500H0zM0 7.500h2.500V10H0zM0 14h2.500v2.500H0z" fill="#4c5462" /></Svg>
      </div>
      <div className="flex pl-[13px] pt-[5px] h-[74px]">
        <div className="w-[50px] shrink-0 flex flex-col">
          <Svg w={28} h={29} className="ml-[6px]"><path d="M8 26.500H2.500v-23h20V12" stroke={G} strokeWidth="1.500" /><path d="M8 1.500h9v3H8z" fill={W} stroke={K} /><path d="M8 14h19v10l-4 4H8z" fill={W} stroke={G} strokeWidth="1.200" /></Svg>
          <div className="flex items-center mt-[5px] text-[#5f697a]"><T>粘贴</T><Caret className="ml-[3px]" w={6} h={3} color={G} /></div>
        </div>
        <div className="w-[65px] shrink-0 flex flex-col pl-[2px] text-[#b5b8bd]">
          <div className="flex items-center h-[27px]"><Svg w={18} h={17}><path d="M2 0l11 12M16 0L5 12" stroke={L} strokeWidth="1.200" /><circle cx="3.500" cy="13.500" r="2.700" stroke={L} /><circle cx="14" cy="13.500" r="2.700" stroke={L} /></Svg><T className="ml-[5px]">剪切</T></div>
          <div className="flex items-center h-[27px] mt-[4px]"><Svg w={18} h={19}><rect x="4.500" y="0.500" width="13" height="14" rx="2" stroke={L} /><path d="M4 4.500H0.500v14h11l3-3" stroke={L} /></Svg><T className="ml-[5px]">复制</T></div>
        </div>
        <div className="w-[68px] shrink-0 flex flex-col text-[#b5b8bd]">
          <Svg w={28} h={29} className="ml-[9px]"><path d="M1.500 27.500V14q0-3 3-3H11V1h6v10h7q3 0 3 3v13.500zM1.500 17.500h26" stroke={L} strokeWidth="1.200" /></Svg>
          <T className="mt-[5px]">格式刷</T>
          <Svg w={7} h={6} className="ml-[45px] -mt-[2px]"><path d="M6 0v5H1" stroke={L} strokeWidth="1.500" /></Svg>
        </div>
        <div className="w-[107px] shrink-0 flex flex-col">
          <Svg w={30} h={29} className="ml-[27px]"><circle cx="14.500" cy="14.500" r="13.800" stroke={G} strokeWidth="1.400" /><path d="M11 7.500v14l9.500-7z" stroke={G} strokeWidth="1.100" /></Svg>
          <div className="flex items-center mt-[5px]"><T>从当前开始</T><Caret className="ml-[3px]" w={6} h={3} color={G} /></div>
        </div>
        <div className="w-[97px] shrink-0 flex flex-col">
          <Svg w={31} h={29} className="ml-[27px]"><path d="M13 4h17v23.500H2V13" stroke={G} strokeWidth="1.500" /><rect x="7" y="16.500" width="17" height="6" stroke={G} /><path d="M13 9.500h12" stroke={K} /><path d="M6 1v10M1 6h10M2 2l8 8M10 2l-8 8" stroke={G} strokeWidth=".8" /></Svg>
          <div className="flex items-center mt-[5px]"><T>新建幻灯片</T><Caret className="ml-[3px]" w={6} h={3} color={G} /></div>
        </div>
        <div className="w-[50px] shrink-0 flex flex-col">
          <Svg w={29} h={29} className="ml-[6px]"><rect x="0.700" y="3" width="27" height="24.500" rx="1" stroke={G} strokeWidth="1.400" /><rect x="5.500" y="7.500" width="17" height="6" stroke={G} /><path d="M5 18h5v5H5zM14 18h9M14 23h9" stroke={G} /></Svg>
          <div className="flex items-center mt-[5px]"><T>版式</T><Caret className="ml-[3px]" w={6} h={3} color={G} /></div>
        </div>
        <div className="w-[21px] shrink-0 pl-px">
          <Svg w={18} h={19}><path d="M8 2.500h10M9 6.500h9M8 10.500h10M9 14.500h8M1 10v8h17" stroke={G} strokeWidth="1.100" /><path d="M4 0v7M0 3.500h7" stroke={L} /></Svg>
          <Svg w={18} h={19} className="mt-[13px]"><path d="M8 3.500h10M0 10.500h18M0 17.500h18" stroke={G} strokeWidth="1.300" /><path d="M4 0v7M0 3.500h7" stroke={L} /></Svg>
        </div>
        <div className="w-[17px] h-[72px] -mt-[4px] shrink-0 bg-[#b5b8bd] flex items-center justify-center"><div className="w-[3px] h-[6px] bg-[#808b9c]" /></div>
      </div>
    </div>
  );
}

/* ---------- taskbar ---------- */

function Task({ children, icon, active }) {
  return (
    <div className={"w-[160px] h-[46px] shrink-0 rounded-[2px] border border-[#121212] shadow-[inset_0_0_0_1px_#c4c7cd] flex items-center text-[15.300px] leading-[20px] text-[#f0f1f6] " + (active ? "bg-gradient-to-b from-[#dcdee3] to-[#b9bcc2]" : "bg-gradient-to-br from-[#d2d4d9] via-[#949dab] via-[50%] to-[#848fa0]")}>
      <div className="w-[52px] shrink-0 flex items-center justify-center">{icon}</div>
      <T>{children}</T>
    </div>
  );
}

function Taskbar() {
  return (
    <div className="h-[48px] border-t border-t-[#121212] bg-[#808b9c] flex items-center">
      <Svg w={40} h={40} className="ml-[13px]">
        <circle cx="20" cy="20" r="19.300" fill="#8b95a5" stroke={L} />
        <path d="M6 12Q20-4 34 12q-14-5-28 0z" fill="#d2d4d9" />
        <path d="M1 17q5 0 10 2l0 11q-9-2-10-13zM39 17q-5 0-10 2l0 11q9-2 10-13z" fill={K} />
        <path d="M11 35q9 5 18 0l-4-5H15z" fill="#4c5462" />
        <path d="M14 15l6-2v6h-6zM21 13l6 3v4h-6zM14 21h6v6l-6-2zM21 21h6v5l-6 2z" fill={L} /><path d="M16 20l4-4 3 6-4 4z" fill={W} />
      </Svg>
      <Svg w={34} h={33} className="ml-[35px]"><rect x="1" y="2" width="31" height="21" fill={W} /><path d="M3 1h29M0 23h32" stroke={K} strokeDasharray="1 1" /><path d="M4 7h14M4 11h12M4 15h10M4 19h12" stroke={L} /><circle cx="22" cy="15" r="8.500" fill="#d2d4d9" stroke={G} /><path d="M15 22L3 31" stroke={L} strokeWidth="2.500" /></Svg>
      <div className="flex ml-[20px] gap-[2px]">
        <Task icon={<Svg w={30} h={36}><path d="M3 3q5-4 9 0v28l-4 4-6-6z" fill={L} /><path d="M8 3q6-3 9 4l-2 26-5 2z" fill={W} /><path d="M12 5q5 0 6 6v22h-6z" fill={G} /><path d="M18 4l8 2v8l-2 18-6 2z" fill={L} /></Svg>}>RHCE第2周...</Task>
        <Task icon={<Svg w={38} h={36}><path d="M2 2h20l4 5v21H2z" fill={W} stroke={L} /><path d="M2 28h27l1 6H3z" fill={K} /><path d="M9 25q-4-6 1-10 4-3 8 0M9 20h12M14 16l6 9" stroke={K} strokeWidth="1.500" /><path d="M37 1L26 18" stroke="#4c5462" strokeWidth="2" /><path d="M4 33h26" stroke={W} strokeDasharray="3 2" /></Svg>}>C:\Users\A...</Task>
      </div>
      <Svg w={40} h={40} className="ml-[15px]"><circle cx="20" cy="20" r="18.200" fill={G} stroke={W} strokeWidth="2.400" /><path d="M28 6Q11 4 10 13q0 6 9 9 7 3 5 7-3 4-16 3 8 5 15 3 8-2 8-9 0-6-9-9-6-2-5-5 2-4 11-2z" fill={W} /></Svg>
      <div className="flex ml-[16px] gap-[2px]">
        <Task active icon={<Svg w={38} h={38}><rect x="0" y="1" width="29" height="29" rx="4" fill={G} /><path d="M6 9l5 11 6-9 3 9 5-11H14" stroke={W} strokeWidth="2.500" /><rect x="20" y="18" width="18" height="19" rx="3" fill={G} /><path d="M25 33v-5h8v-5h-9" stroke={W} strokeWidth="1.800" /></Svg>}>07 vim高级...</Task>
        <Task icon={<Svg w={42} h={42}><rect width="41" height="42" fill={G} /><path d="M21 6l15 12-15 12L5 18z" fill={W} /><path d="M17 13v10l8-5z" fill={G} /><path d="M10 25l5 2 6 4 6-4 4-2v6l-11 6-9-6z" fill={W} /></Svg>}>腾讯课堂</Task>
        <Task icon={<Svg w={34} h={34}><path d="M6 2h20l6 5v20l-6 6H4L1 28V7z" fill={G} /><path d="M5 28V6h18M5 6l4-4h17" stroke={L} /><path d="M29 6v18l-4 5" stroke={K} strokeDasharray="3 1" /><path d="M11 12v11" stroke={K} strokeWidth="4" /><path d="M16 14v6" stroke={L} strokeWidth="2" /></Svg>}>rhel8 - VM...</Task>
      </div>
      <div className="flex-1" />
      <div className="w-[472px] shrink-0 flex items-center">
        <Svg w={17} h={18} className="-mt-[6px]"><path d="M16 3Q3 2 3 6t10 4q0 5-12 4" stroke={W} strokeWidth="3.500" /></Svg>
        <div className="flex items-center ml-[19px] gap-[10px]">
          <Svg w={20} h={22}><path d="M4 2h4v5H4zM11 2h4v5h-4z" fill={W} /><path d="M6 3v3M12 3v3" stroke={K} strokeWidth="2" /><path d="M1 9v8l3 4h12l3-4V9" stroke={K} strokeDasharray="2 1" /><path d="M10 11v1M10 15v1" stroke={K} /></Svg>
          <Svg w={20} h={20}><path d="M1.500 3.500q5 0 8-2.500 4 2.500 9 2.500 0 11-9 15-8-4-8-15z" stroke={W} strokeWidth="2.400" /><path d="M4 7l6 5 6-5" stroke={W} strokeWidth="2.200" /></Svg>
          <Svg w={20} h={20}><rect width="20" height="20" rx="1" fill={W} /><path d="M10 3q5 1 8 6-3 5-8 6-5-1-8-6 3-5 8-6z" fill={G} /><path d="M7 7h6l-3 4z" fill={W} /><path d="M6 15l4 3 4-3" stroke={G} strokeWidth="1.500" /></Svg>
          <Svg w={20} h={20}><path d="M1 3h17v12H1z" fill="#d2d4d9" /><circle cx="11" cy="9" r="4" stroke={G} /><path d="M1 3.500h17M1 14.500h17" stroke={K} strokeDasharray="1 1" /><path d="M6 13l-5 4" stroke={W} /></Svg>
          <Svg w={20} h={20}><path d="M2 10l8-2 7-3-2 5-7 1z" fill={W} /><path d="M10 9l6-3M13 14h5M15 12v5" stroke={K} strokeWidth="1.800" /></Svg>
          <Svg w={20} h={20}><g stroke="#e4e5ea" strokeWidth="2"><circle cx="10" cy="5" r="2.500" /><circle cx="15" cy="8" r="2.500" /><circle cx="14" cy="14" r="2.500" /><circle cx="8" cy="15" r="2.500" /><circle cx="4.500" cy="10" r="2.500" /><circle cx="10" cy="10" r="2" /></g></Svg>
          <Svg w={20} h={20}><path d="M6 1h9v9H6zM1 7h9v10H1z" fill={W} stroke={K} strokeWidth="1.200" /><path d="M11 7l8 6-8 6z" fill="#e4e5ea" stroke={K} /><path d="M3 11h6M3 14h6" stroke={G} /></Svg>
          <Svg w={20} h={20}><path d="M2 0q8-1 13 6 4 6 4 13-6-1-11-8Q4 5 2 0z" fill={K} /><path d="M3 6l2 8M1 19h8" stroke={K} strokeDasharray="2 1" /><circle cx="7" cy="12" r="3" fill="#d2d4d9" /><path d="M4 15h7l2 4H4z" fill="#d2d4d9" /></Svg>
          <Svg w={20} h={20}><path d="M1 6h3l6-6v20l-6-6H1z" fill={W} stroke={K} strokeWidth=".8" /><path d="M13 6q2 4 0 8M16 3q4 7 0 14" stroke={W} strokeWidth="1.200" strokeDasharray="2 1" /></Svg>
          <Svg w={20} h={20}><rect x="6" y="4" width="13" height="11" fill={G} stroke={W} strokeWidth="1.700" /><path d="M19.500 3v13H8" stroke={K} /><path d="M8 18h9M12 16v2" stroke={W} strokeWidth="1.800" /><rect x="1" y="1" width="5" height="8" fill={W} stroke={K} /><path d="M3.500 10v6" stroke={W} strokeWidth="1.500" /></Svg>
        </div>
        <div className="ml-[42px] w-[84px] shrink-0 flex flex-col items-center text-[#f0f1f6] text-[15.200px] leading-[20px]"><T>17:04</T><T>2020/4/18</T></div>
        <div className="ml-[4px] w-[14px] h-[46px] shrink-0 border border-[#b5b8bd] border-l-[#4c5462] flex justify-center pt-[5px]"><div className="w-[9px] h-[17px] bg-[#5f697a]" /></div>
      </div>
    </div>
  );
}

export default function App() {
  return (
    <div className="relative w-[1920px] h-[1080px] overflow-hidden bg-[#f0f1f6] text-[#121212] [font-family:'Open_Sans','Noto_Sans_CJK_SC',sans-serif]">
      <VmTitle />
      <VmMenu />
      <div className="h-[3px] bg-[#808b9c]" />
      <VmTabs />
      <Guest />
      <StatusBar />
      <Taskbar />
      <Explorer />
      <Wps />
      <Svg w={16} h={25} className="absolute left-[1145px] top-[70px]"><path d="M0.500 1v18.500l4.500-4 3 7.500 3.500-1.500-3-7h6z" fill={W} stroke={K} /></Svg>
    </div>
  );
}
